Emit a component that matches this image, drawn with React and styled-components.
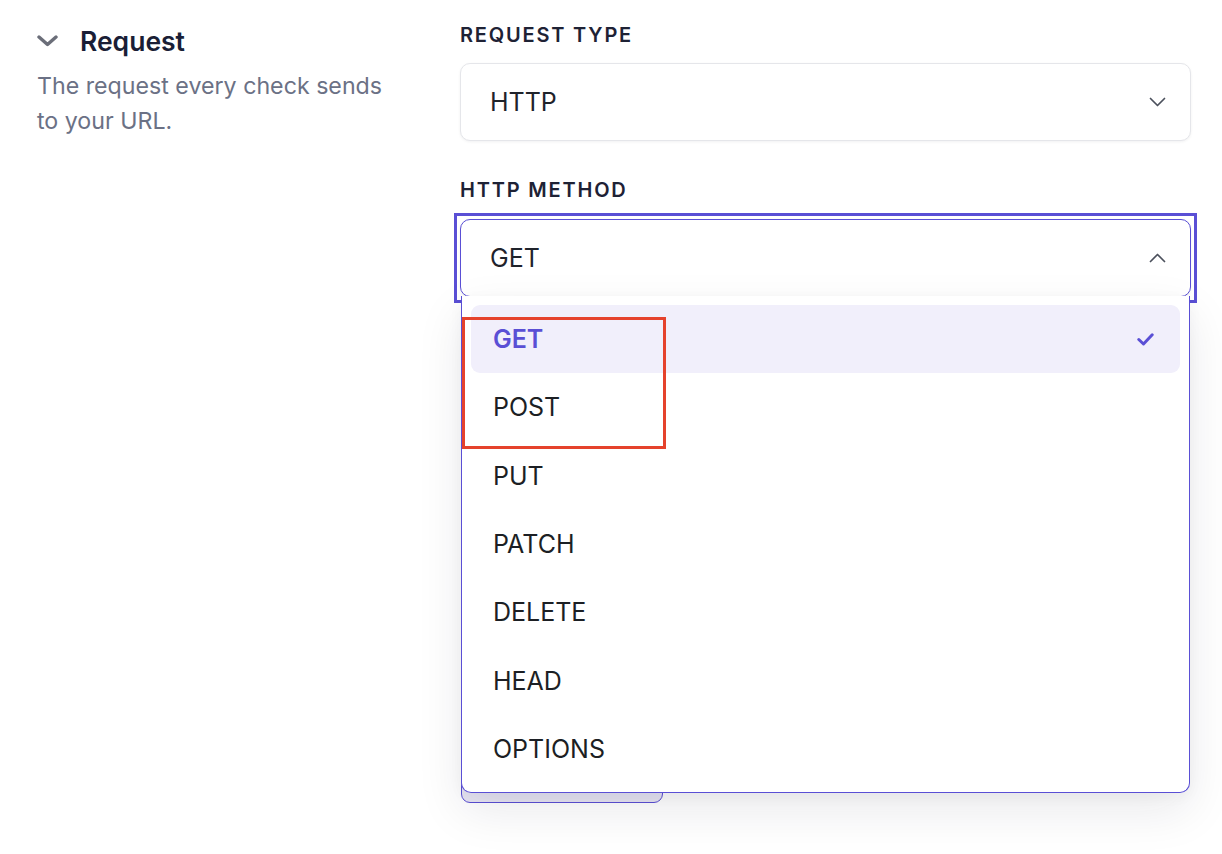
import React from "react";
import styled, { createGlobalStyle } from "styled-components";

const GlobalStyle = createGlobalStyle`
  html, body {
    margin: 0;
    padding: 0;
    background: #ffffff;
    font-family: Inter, "Noto Sans", "Liberation Sans", sans-serif;
    -webkit-font-smoothing: antialiased;
  }
  * { box-sizing: border-box; }
`;

const accent = "#5a4fd5";

const Page = styled.div`
  display: grid;
  grid-template-columns: 423px 731px;
  align-items: start;
  padding: 23px 0 0 37px;
  min-height: 854px;
  overflow: hidden;
`;

const Aside = styled.section`
  display: flex;
  flex-direction: column;
  padding-top: 3px;
`;

const SectionHeader = styled.button`
  display: flex;
  align-items: center;
  gap: 22px;
  padding: 0;
  margin: 0;
  border: 0;
  background: none;
  cursor: pointer;
  font: inherit;
`;

const SectionTitle = styled.span`
  font-size: 26.5px;
  line-height: 30px;
  font-weight: 600;
  color: #1a1e36;
`;

const Description = styled.p`
  margin: 13px 0 0;
  max-width: 365px;
  font-size: 23.2px;
  line-height: 35px;
  color: #6b7185;
`;

const Fields = styled.div`
  display: flex;
  flex-direction: column;
`;

const Field = styled.div`
  display: flex;
  flex-direction: column;
  margin-top: ${(p) => (p.$first ? "0" : "37px")};
`;

const Label = styled.label`
  font-size: 20px;
  line-height: 24px;
  font-weight: 600;
  letter-spacing: 1.8px;
  text-transform: uppercase;
  color: #1e2235;
  margin-bottom: ${(p) => p.$gap || 16}px;
`;

const SelectWrap = styled.div`
  position: relative;
`;

const Trigger = styled.button`
  position: relative;
  display: flex;
  align-items: center;
  justify-content: space-between;
  width: 100%;
  height: 78px;
  padding: 0 24px 0 29px;
  border: 1px solid ${(p) => (p.$open ? accent : "#e5e6ea")};
  border-radius: 10px;
  background: #ffffff;
  box-shadow: 0 1px 3px rgba(20, 24, 40, 0.06);
  font: inherit;
  font-size: 25px;
  color: #1f232b;
  text-align: left;
  cursor: pointer;

  ${(p) =>
    p.$open &&
    `
    &::before {
      content: "";
      position: absolute;
      inset: -7px;
      border: 3px solid ${accent};
      pointer-events: none;
    }
  `}
`;

const Menu = styled.ul`
  position: absolute;
  top: 77px;
  left: 1px;
  right: 1px;
  z-index: 5;
  margin: 0;
  padding: 9px;
  list-style: none;
  background: #ffffff;
  border: 1px solid ${accent};
  border-top: 0;
  border-radius: 0 0 10px 10px;
  box-shadow: 0 18px 48px rgba(20, 24, 40, 0.09), 0 4px 14px rgba(20, 24, 40, 0.04);
`;

const Option = styled.li`
  display: flex;
  align-items: center;
  justify-content: space-between;
  height: 68.33px;
  padding: 0 26px 0 22px;
  border-radius: 9px;
  font-size: 25px;
  font-weight: ${(p) => (p.$selected ? 600 : 400)};
  color: ${(p) => (p.$selected ? accent : "#1c1f24")};
  background: ${(p) => (p.$selected ? "#f1effb" : "transparent")};
`;

const Highlight = styled.div`
  position: absolute;
  left: 2px;
  top: 98px;
  width: 204px;
  height: 132px;
  border: 3.5px solid #e5422c;
  z-index: 6;
  pointer-events: none;
`;

const BodyInput = styled.textarea`
  margin: 0 3px;
  height: 409px;
  border: 1px solid #e5e6ea;
  border-radius: 10px;
  resize: none;
  font: inherit;
  font-size: 20px;
  padding: 16px 28px;
  color: #1f232b;
`;

const AddButton = styled.button`
  display: flex;
  align-items: center;
  justify-content: center;
  align-self: flex-start;
  width: 202px;
  height: 44px;
  margin-top: 16px;
  margin-left: 1px;
  border: 1px solid ${accent};
  border-radius: 9px;
  background: #e8e6f4;
  color: ${accent};
`;

const Chevron = ({ up }) => (
  <svg width="17" height="10" viewBox="0 0 17 10" fill="none">
    <path
      d={up ? "M1.5 8.5L8.5 1.5L15.5 8.5" : "M1.5 1.5L8.5 8.5L15.5 1.5"}
      stroke="#4b505c"
      strokeWidth="1.7"
      strokeLinecap="round"
      strokeLinejoin="round"
    />
  </svg>
);

const CollapseIcon = () => (
  <svg width="21" height="12" viewBox="0 0 21 12" fill="none">
    <path
      d="M2 2L10.5 9.5L19 2"
      stroke="#6b6e79"
      strokeWidth="3.4"
      strokeLinecap="round"
      strokeLinejoin="round"
    />
  </svg>
);

const CheckIcon = () => (
  <svg width="17" height="13" viewBox="0 0 17 13" fill="none">
    <path
      d="M1.8 6.5L6.5 11L15.2 1.8"
      stroke={accent}
      strokeWidth="3"
      strokeLinecap="round"
      strokeLinejoin="round"
    />
  </svg>
);

const PlusIcon = () => (
  <svg width="16" height="16" viewBox="0 0 16 16" fill="none">
    <path d="M8 2v12M2 8h12" stroke={accent} strokeWidth="2" strokeLinecap="round" />
  </svg>
);

const methods = ["GET", "POST", "PUT", "PATCH", "DELETE", "HEAD", "OPTIONS"];

export default function App() {
  const selected = "GET";
  return (
    <>
      <GlobalStyle />
      <Page>
        <Aside>
          <SectionHeader type="button">
            <CollapseIcon />
            <SectionTitle>Request</SectionTitle>
          </SectionHeader>
          <Description>The request every check sends to your URL.</Description>
        </Aside>

        <Fields>
          <Field $first>
            <Label>Request type</Label>
            <Trigger type="button">
              <span>HTTP</span>
              <Chevron />
            </Trigger>
          </Field>

          <Field>
            <Label $gap={17}>HTTP method</Label>
            <SelectWrap>
              <Trigger type="button" $open>
                <span>{selected}</span>
                <Chevron up />
              </Trigger>
              <Menu role="listbox">
                {methods.map((m) => (
                  <Option key={m} $selected={m === selected} role="option">
                    <span>{m}</span>
                    {m === selected && <CheckIcon />}
                  </Option>
                ))}
              </Menu>
              <Highlight />
            </SelectWrap>
          </Field>

          <Field>
            <BodyInput aria-label="Request body" defaultValue="" />
            <AddButton type="button" aria-label="Add header">
              <PlusIcon />
            </AddButton>
          </Field>
        </Fields>
      </Page>
    </>
  );
}
